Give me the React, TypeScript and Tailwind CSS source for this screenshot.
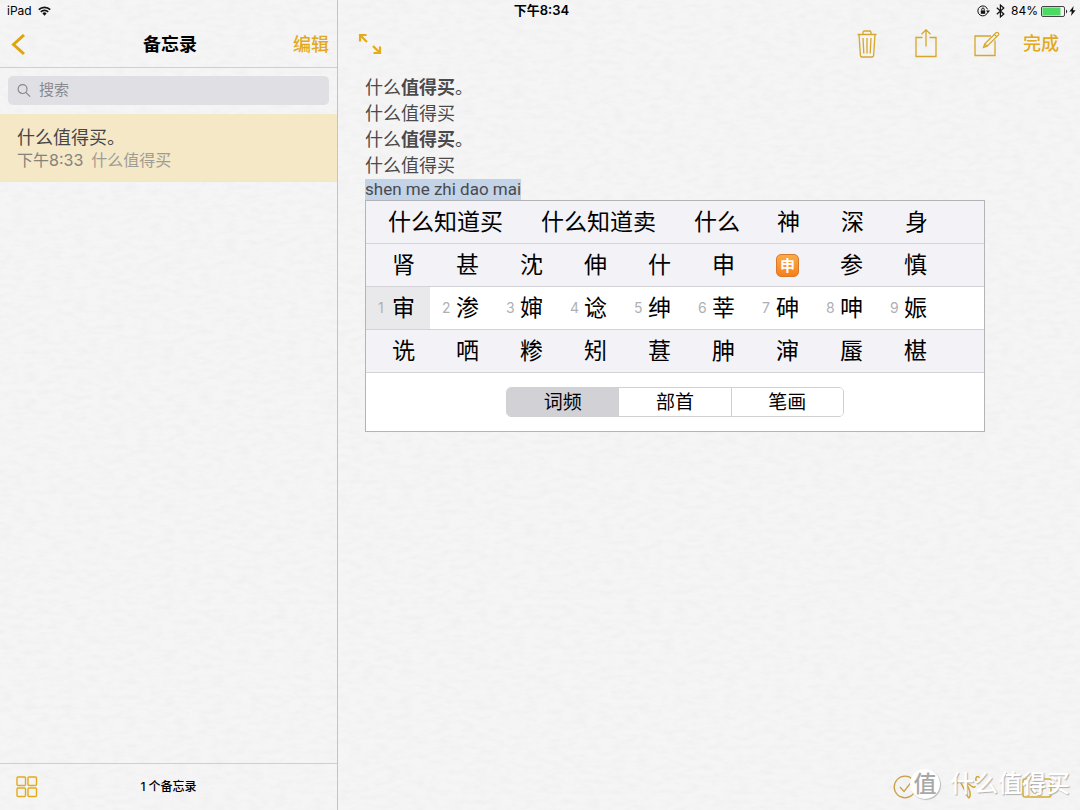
import { useState } from "react";

const phrases = [
    { text: "什么知道买", width: "w-[153px]" },
    { text: "什么知道卖", width: "w-[153px]" },
    { text: "什么", width: "w-[83px]" },
    { text: "神", width: "w-16" },
    { text: "深", width: "w-16" },
    { text: "身", width: "w-16" },
];

const rows = [
    ["肾", "甚", "沈", "伸", "什", "申", "🈸", "参", "慎"],
    ["审", "渗", "婶", "谂", "绅", "莘", "砷", "呻", "娠"],
    ["诜", "哂", "糁", "矧", "葚", "胂", "渖", "蜃", "椹"],
];

const sortModes = ["词频", "部首", "笔画"];

// Paper grain under the whole app
function PaperTexture() {
    return (
        <svg className="absolute inset-0 w-full h-full pointer-events-none" aria-hidden="true">
            <filter id="paper" x="0" y="0" width="100%" height="100%">
                <feTurbulence type="fractalNoise" baseFrequency="0.08 0.2" numOctaves="3" seed="4" />
                <feColorMatrix values="0 0 0 0 0.6  0 0 0 0 0.6  0 0 0 0 0.6  0.24 0 0 0 -0.09" />
            </filter>
            <rect width="100%" height="100%" filter="url(#paper)" />
        </svg>
    );
}

function StatusBar() {
    return (
        <div className="absolute inset-x-0 top-0 h-[22px] pl-[7px] pr-1 grid grid-cols-3 items-center text-xs text-black">
            <div className="flex items-center gap-[6px]">
                <span>iPad</span>
                <svg width="13" height="10" viewBox="0 0 13 10" fill="none" stroke="#111" strokeWidth="1.7">
                    <path d="M0.8 3.6a8.2 8.2 0 0 1 11.4 0" />
                    <path d="M2.8 5.8a5.3 5.3 0 0 1 7.4 0" />
                    <path d="M4.4 7.4a3 3 0 0 1 4.2 0L6.5 9.7z" fill="#111" stroke="none" />
                </svg>
            </div>
            <span className="text-center text-[13px] font-semibold">下午8:34</span>
            <div className="flex items-center justify-end">
                {/* Rotation lock */}
                <svg width="13" height="12" viewBox="0 0 13 12" fill="none" stroke="#111">
                    <path d="M10.6 7.4A5 5 0 1 1 10.6 4.4" />
                    <path d="M9 5.4h4l-2 2.6z" fill="#111" stroke="none" />
                    <rect x="3.8" y="5.4" width="4.4" height="3.4" fill="#111" stroke="none" />
                    <path d="M4.8 5.4V4.2a1.2 1.2 0 0 1 2.4 0v1.2" />
                </svg>
                <svg className="ml-[6px]" width="9" height="14" viewBox="0 0 9 14" fill="none" stroke="#111" strokeWidth="1.2">
                    <path d="M0.8 3.8 7.8 10 4.4 13V1l3.4 3L0.8 10.2" />
                </svg>
                <span className="ml-[6px]">84%</span>
                <svg className="ml-[3px]" width="27" height="11" viewBox="0 0 27 11">
                    <rect x="0.5" y="0.5" width="23" height="10" rx="1.5" fill="none" stroke="#444" />
                    <rect x="1.5" y="1.5" width="18" height="8" fill="#4cd964" />
                    <path d="M25 3.5c1.6 0.6 1.6 3.4 0 4z" fill="#333" />
                </svg>
                <svg className="ml-[1px]" width="7" height="10" viewBox="0 0 7 10">
                    <path d="M4.6 0 0.4 5.6h2.4L2 10 6.6 4.2H4z" fill="#111" />
                </svg>
            </div>
        </div>
    );
}

function Sidebar() {
    return (
        <aside className="w-[338px] shrink-0 border-r border-[#c4c4c4] pt-[22px] flex flex-col">
            <header className="h-[46px] border-b border-[#cfcfcf] pl-[11px] pr-2 grid grid-cols-[1fr_auto_1fr] items-center text-lg">
                <button aria-label="返回" className="justify-self-start">
                    <svg width="15" height="22" viewBox="0 0 15 22" fill="none" stroke="#e0a50c" strokeWidth="3">
                        <path d="M13 1 2.5 10.5 13 20" />
                    </svg>
                </button>
                <h1 className="font-bold text-black">备忘录</h1>
                <button className="justify-self-end font-medium text-[#e2a820]">编辑</button>
            </header>

            <div className="px-2 pt-2 pb-[9px]">
                <label className="h-[29px] rounded-[5px] bg-[#dedee2]/90 flex items-center gap-2 pl-[9px]">
                    <svg width="15" height="15" viewBox="0 0 15 15" fill="none" stroke="#85858b" strokeWidth="1.2">
                        <circle cx="6" cy="6" r="4.8" />
                        <path d="m9.5 9.5 4.6 4.6" />
                    </svg>
                    <input
                        type="text"
                        placeholder="搜索"
                        aria-label="搜索"
                        className="w-full bg-transparent outline-none text-[15px] placeholder:text-[#8a8a90]"
                    />
                </label>
            </div>

            <ul>
                <li>
                    <button className="w-full h-[68px] px-[17px] pt-[2px] text-left bg-[#f4e7c2]/90 border-b border-[#efe6d0]">
                        <span className="block text-lg leading-[22px] text-[#45454a]">什么值得买。</span>
                        <span className="block text-base leading-[22px] text-[#85827c]">
                            下午8:33<span className="ml-2 text-[#a09c94]">什么值得买</span>
                        </span>
                    </button>
                </li>
            </ul>

            <footer className="mt-auto h-[47px] border-t border-[#cfcfcf] px-4 grid grid-cols-[1fr_auto_1fr] items-center">
                <button aria-label="附件" className="justify-self-start">
                    <svg width="22" height="22" viewBox="0 0 22 22" fill="none" stroke="#e3ab1c" strokeWidth="1.4">
                        <rect x="1" y="1" width="8.5" height="8.5" rx="1" />
                        <rect x="12" y="1" width="8.5" height="8.5" rx="1" />
                        <rect x="1" y="12" width="8.5" height="8.5" rx="1" />
                        <rect x="12" y="12" width="8.5" height="8.5" rx="1" />
                    </svg>
                </button>
                <span className="text-xs font-medium text-black">1 个备忘录</span>
            </footer>
        </aside>
    );
}

function Toolbar() {
    return (
        <header className="h-[46px] pl-5 pr-[21px] pb-[3px] flex items-center">
            <button aria-label="全屏">
                <svg width="24" height="24" viewBox="0 0 24 24" fill="none" stroke="#e3aa1a" strokeWidth="2.2">
                    <path d="M2 9.5V3h6.5M2.5 3.5 9 10" />
                    <path d="M22 14.5V21h-6.5M21.5 20.5 15 14" />
                </svg>
            </button>
            <div className="ml-auto flex items-center">
                <button aria-label="删除">
                    <svg width="20" height="28" viewBox="0 0 20 28" fill="none" stroke="#d6a72c" strokeWidth="1.3">
                        <path d="M0.5 4.5h19M6 4.5V2.4Q6 1 7.4 1h5.2Q14 1 14 2.4v2.1" />
                        <path d="M2 4.5 3.4 25.4Q3.5 27 5 27h10q1.5 0 1.6-1.6L18 4.5" />
                        <path d="M6 8l0.8 15.5M10 8v15.5M14 8l-0.8 15.5" />
                    </svg>
                </button>
                <button aria-label="共享" className="ml-[38px]">
                    <svg width="22" height="30" viewBox="0 0 22 30" fill="none" stroke="#d6a72c" strokeWidth="1.3">
                        <path d="M7.5 8.5H1v19h20v-19h-6.5" />
                        <path d="M11 17.5V1.5M6.5 5.3 11 0.8l4.5 4.5" />
                    </svg>
                </button>
                <button aria-label="新建" className="ml-[37px]">
                    <svg width="26" height="26" viewBox="0 0 26 26" fill="none" stroke="#d6a72c" strokeWidth="1.3">
                        <path d="M17 5H1v19.5h20V9.5" />
                        <path d="m9.5 16.5 1.3-3.6L22 1.8q1.2-0.9 2.2 0.1t0.1 2.2L13.1 15.2zM20.4 3.4l2.3 2.3M10.8 12.9l2.3 2.3" />
                    </svg>
                </button>
                <button className="ml-[23px] pt-[1px] text-lg font-medium text-[#e2a820]">完成</button>
            </div>
        </header>
    );
}

function Candidates() {
    const [mode, setMode] = useState("词频");

    return (
        <div className="w-[620px] max-w-full border border-[#b4b4b6] bg-white text-[23px] leading-[34px] text-black overflow-hidden">
            {/* Phrase row */}
            <div className="h-[43px] bg-[#f2f2f7] border-b border-[#d3d3d7] flex">
                {phrases.map((item) => (
                    <button key={item.text} className={`${item.width} pl-[22px] text-left whitespace-nowrap`}>
                        {item.text}
                    </button>
                ))}
            </div>

            {/* Single characters, the middle row is the numbered one */}
            {rows.map((row, r) => (
                <div
                    key={r}
                    className={`h-[43px] border-b border-[#d3d3d7] flex ${r === 1 ? "bg-white" : "bg-[#f2f2f7]"}`}
                >
                    {row.map((char, i) => (
                        <button
                            key={char}
                            className={`w-16 flex items-center ${r === 1 && i === 0 ? "bg-[#e9e9eb]" : ""}`}
                        >
                            <span className="w-[26px] pl-3 text-left text-sm text-[#b0b0b4]">
                                {r === 1 ? i + 1 : ""}
                            </span>
                            {char === "🈸" ? (
                                <span className="w-[23px] h-[23px] pt-[1px] rounded-[5px] border border-[#d87a2c] bg-linear-to-b from-[#fdab45] to-[#f77f18] flex items-center justify-center text-[15px] leading-none font-bold text-white">
                                    申
                                </span>
                            ) : (
                                char
                            )}
                        </button>
                    ))}
                </div>
            ))}

            {/* Sort modes */}
            <div className="py-[14px] flex justify-center bg-white">
                <div className="h-[30px] w-[338px] rounded-[5px] border border-[#d0d0d3] flex overflow-hidden divide-x divide-[#d0d0d3] text-[19px] leading-[26px]">
                    {sortModes.map((name) => (
                        <button
                            key={name}
                            onClick={() => setMode(name)}
                            className={`flex-1 pt-[2px] ${mode === name ? "bg-[#d1d1d6]" : "bg-white"}`}
                        >
                            {name}
                        </button>
                    ))}
                </div>
            </div>
        </div>
    );
}

function Editor() {
    return (
        <main className="flex-1 min-w-0 pt-[22px] flex flex-col">
            <Toolbar />
            <div className="pl-[27px] pr-4 pt-[7px] text-lg leading-[26px] text-[#4a4a4c]">
                <p>什么<span className="font-bold">值得买</span>。</p>
                <p>什么值得买</p>
                <p>什么<span className="font-bold">值得买</span>。</p>
                <p>什么值得买</p>
                <p className="flex">
                    <span className="h-[21px] leading-[21px] text-[17px] bg-[#c3d3e8] font-[Roboto,sans-serif]">shen me zhi dao mai</span>
                </p>
                <Candidates />
            </div>

            <footer className="mt-auto h-[47px] pl-[555px] pr-7 flex items-center justify-between">
                <button aria-label="清单">
                    <svg width="24" height="24" viewBox="0 0 24 24" fill="none" stroke="#c9a04a" strokeWidth="1.3">
                        <circle cx="12" cy="12" r="10.8" />
                        <path d="m7 12 4 4.5 7-9" />
                    </svg>
                </button>
                <button aria-label="绘图">
                    <svg width="28" height="24" viewBox="0 0 28 24" fill="none" stroke="#d0a530" strokeWidth="1.5">
                        <path d="M1 9q2-4 4-1l7 14q1 2 2-1t-2-9 2-2 5 1" />
                        <path d="M24 3q-3-3-4 0t2 3-1 3" />
                    </svg>
                </button>
                <button aria-label="相机">
                    <svg width="30" height="24" viewBox="0 0 30 24" fill="none" stroke="#d4ac2c" strokeWidth="1.5">
                        <path d="M3 4h5l2.5-3h9L22 4h5q2 0 2 2v14q0 2-2 2H3q-2 0-2-2V6q0-2 2-2z" />
                        <circle cx="15" cy="12.5" r="6" />
                    </svg>
                </button>
            </footer>
        </main>
    );
}

function Watermark() {
    return (
        <div className="absolute right-[10px] bottom-[9px] h-[34px] flex items-center gap-[10px] text-white pointer-events-none">
            <span className="w-[30px] h-[30px] rounded-full bg-white shadow-[1px_1px_1px_#bbb] flex items-center justify-center text-[23px] leading-none font-medium text-[#a8a8a8]">
                值
            </span>
            <span className="text-2xl leading-none font-medium [text-shadow:1px_1px_1px_#b0b0b0]">什么值得买</span>
        </div>
    );
}

export default function App() {
    return (
        <div className="relative isolate min-h-screen flex bg-[#f5f5f5] font-[Inter,'Noto_Sans_CJK_SC',sans-serif]">
            <div className="absolute inset-0 -z-10">
                <PaperTexture />
            </div>
            <Sidebar />
            <Editor />
            <StatusBar />
            <Watermark />
        </div>
    );
}
